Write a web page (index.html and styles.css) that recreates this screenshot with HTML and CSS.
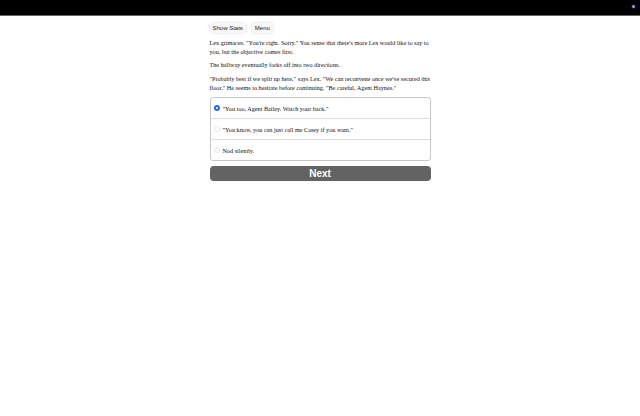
FILE: index.html
```html
<!DOCTYPE html>
<html>
<head>
<meta charset="utf-8">
<link rel="stylesheet" href="styles.css">
</head>
<body>
<header class="topbar"><span class="dot"></span></header>
<main class="story">
  <nav class="toolbar">
    <button class="tool-btn">Show Stats</button>
    <button class="tool-btn">Menu</button>
  </nav>
  <p>Lex grimaces. "You're right. Sorry." You sense that there's more Lex would like to say to you, but the objective comes first.</p>
  <p>The hallway eventually forks off into two directions.</p>
  <p>"Probably best if we split up here," says Lex. "We can reconvene once we've secured this floor." He seems to hesitate before continuing. "Be careful, Agent Haynes."</p>
  <div class="choices">
    <label class="choice"><span class="radio checked"></span>"You too, Agent Bailey. Watch your back."</label>
    <label class="choice"><span class="radio"></span>"You know, you can just call me Casey if you want."</label>
    <label class="choice"><span class="radio"></span>Nod silently.</label>
  </div>
  <button class="next">Next</button>
</main>
</body>
</html>
```
FILE: styles.css
```css
html, body { margin: 0; padding: 0; background: #fff; }
body { font-family: "Liberation Serif", serif; color: #111; }
.topbar { height: 15px; background: #000; border-bottom: 1px solid #666; position: relative; }
.dot { position: absolute; right: 5px; top: 5px; width: 3px; height: 3px; border-radius: 50%; background: #9a8fe6; box-shadow: 0 0 2px #6a5fc0; }
.story { width: 221px; margin: 0 auto; padding-top: 6px; }
.toolbar { display: flex; gap: 4px; margin-bottom: 4px; margin-left: -1px; }
.tool-btn { font-family: "Liberation Sans", sans-serif; font-size: 6px; color: #222; background: #f8f8f8; border: 1px solid #f0f0f0; border-radius: 3px; padding: 2px 3px; height: 12px; line-height: 7px; }
p { font-size: 6.2px; line-height: 9px; margin: 0 0 4.4px; }
.choices { border: 1px solid #c8c8c8; border-radius: 3px; margin-top: 5.5px; }
.choice { display: flex; align-items: center; height: 20px; padding-left: 3px; font-size: 6.2px; border-top: 1px solid #ddd; }
.choice:first-child { border-top: none; }
.radio { width: 4px; height: 4px; border-radius: 50%; border: 1px solid #e6e6e6; margin-right: 3px; flex: none; }
.radio.checked { width: 2px; height: 2px; border: 2px solid #2a6be0; background: #fff; }
.next { display: block; width: 100%; margin-top: 5px; height: 15px; background: #636363; color: #fff; border: none; border-radius: 4px; font-family: "Liberation Sans", sans-serif; font-weight: bold; font-size: 10px; padding: 0; }
```
